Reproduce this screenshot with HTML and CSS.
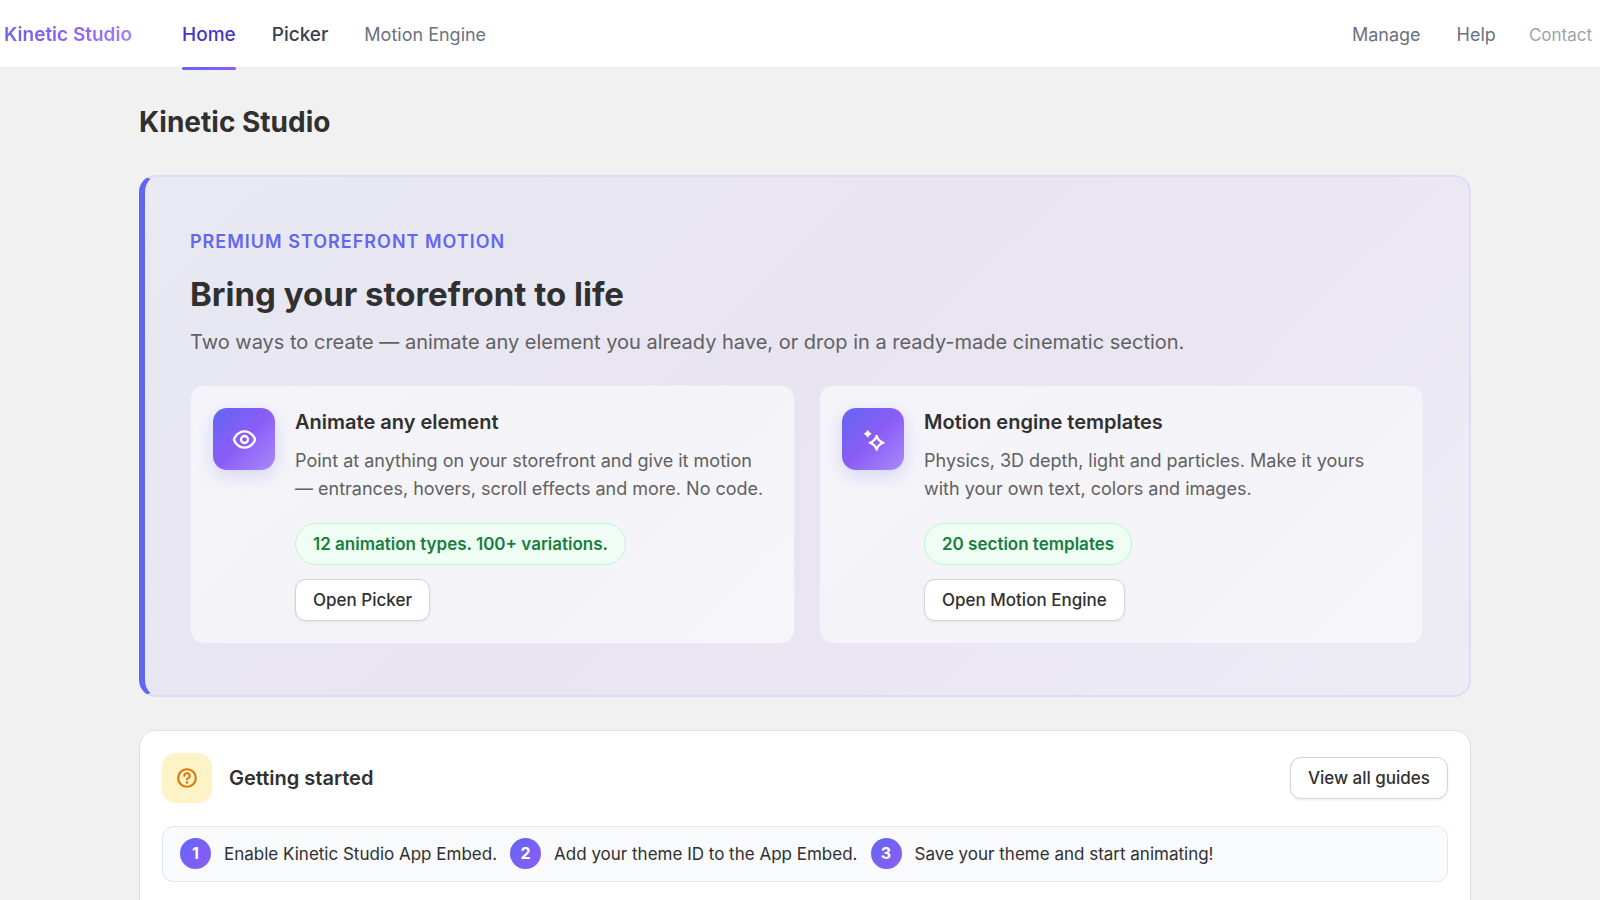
FILE: index.html
```html
<!DOCTYPE html>
<html lang="en">
<head>
    <meta charset="UTF-8">
    <meta name="viewport" content="width=device-width, initial-scale=1.0">
    <title>Kinetic Studio</title>
    <link rel="stylesheet" href="styles.css">
</head>
<body>
    <header class="topbar">
        <a href="#" class="brand">Kinetic Studio</a>
        <nav class="nav-main">
            <a href="#" class="nav-link active">Home</a>
            <a href="#" class="nav-link strong">Picker</a>
            <a href="#" class="nav-link">Motion Engine</a>
        </nav>
        <nav class="nav-side">
            <a href="#" class="nav-link">Manage</a>
            <a href="#" class="nav-link">Help</a>
            <a href="#" class="nav-contact">Contact</a>
        </nav>
    </header>

    <main class="page">
        <h1 class="page-title">Kinetic Studio</h1>

        <section class="hero">
            <p class="eyebrow">Premium storefront motion</p>
            <h2 class="hero-title">Bring your storefront to life</h2>
            <p class="hero-text">Two ways to create — animate any element you already have, or drop in a ready-made cinematic section.</p>

            <div class="feature-grid">
                <article class="feature">
                    <div class="feature-icon">
                        <svg width="31" height="31" viewBox="0 0 20 20" fill="currentColor" fill-rule="evenodd">
                            <path d="M13 10a3 3 0 1 1-6 0 3 3 0 0 1 6 0Zm-1.5 0a1.5 1.5 0 1 1-3 0 1.5 1.5 0 0 1 3 0Z"/>
                            <path d="M10 4c-2.476 0-4.348 1.23-5.577 2.532a9.266 9.266 0 0 0-1.4 1.922 5.98 5.98 0 0 0-.37.818c-.082.227-.153.488-.153.728s.071.501.152.728c.088.246.213.524.371.818.317.587.784 1.27 1.4 1.922 1.229 1.302 3.1 2.532 5.577 2.532 2.476 0 4.348-1.23 5.577-2.532a9.265 9.265 0 0 0 1.4-1.922 5.98 5.98 0 0 0 .37-.818c.082-.227.153-.488.153-.728s-.071-.501-.152-.728a5.984 5.984 0 0 0-.371-.818 9.269 9.269 0 0 0-1.4-1.922c-1.229-1.302-3.1-2.532-5.577-2.532Zm-5.999 6.002v-.004c.004-.02.017-.09.064-.223.058-.161.15-.369.278-.608.255-.474.644-1.042 1.171-1.6 1.053-1.117 2.57-2.067 4.486-2.067s3.433.95 4.486 2.066c.527.56.916 1.127 1.171 1.601.128.24.22.447.278.608.047.132.06.202.064.223v.004c-.004.02-.017.09-.064.223a4.49 4.49 0 0 1-.278.608c-.255.474-.644 1.042-1.171 1.6-1.053 1.117-2.57 2.067-4.486 2.067s-3.433-.95-4.486-2.066a7.77 7.77 0 0 1-1.171-1.601 4.484 4.484 0 0 1-.278-.608c-.047-.132-.06-.202-.064-.223Z"/>
                        </svg>
                    </div>
                    <div class="feature-body">
                        <h3>Animate any element</h3>
                        <p>Point at anything on your storefront and give it motion — entrances, hovers, scroll effects and more. No code.</p>
                        <span class="pill">12 animation types. 100+ variations.</span>
                        <button type="button" class="btn">Open Picker</button>
                    </div>
                </article>

                <article class="feature">
                    <div class="feature-icon">
                        <svg width="31" height="31" viewBox="0 0 20 20" stroke="currentColor" stroke-linejoin="round">
                            <path d="M6.3 4.5Q6.8 5.8 8.1 6.3Q6.8 6.8 6.3 8.1Q5.8 6.8 4.5 6.3Q5.8 5.8 6.3 4.5Z" fill="currentColor" stroke-width="1"/>
                            <path d="M12 7.7Q13 11.1 16.4 12.1Q13 13.1 12 16.5Q11 13.1 7.6 12.1Q11 11.1 12 7.7Z" fill="none" stroke-width="1.5"/>
                        </svg>
                    </div>
                    <div class="feature-body">
                        <h3>Motion engine templates</h3>
                        <p>Physics, 3D depth, light and particles. Make it yours with your own text, colors and images.</p>
                        <span class="pill">20 section templates</span>
                        <button type="button" class="btn">Open Motion Engine</button>
                    </div>
                </article>
            </div>
        </section>

        <section class="guide-card">
            <div class="guide-head">
                <div class="guide-icon">
                    <svg width="28" height="28" viewBox="0 0 20 20" fill="none" stroke="currentColor" stroke-width="1.5" stroke-linecap="round" stroke-linejoin="round">
                        <circle cx="10" cy="10" r="6.3"/>
                        <path d="M8.1 8.5a1.9 1.9 0 1 1 2.8 1.6c-.55.32-.9.54-.9 1"/>
                        <circle cx="10" cy="13.2" r=".9" fill="currentColor" stroke="none"/>
                    </svg>
                </div>
                <h2>Getting started</h2>
                <button type="button" class="btn">View all guides</button>
            </div>
            <ol class="steps">
                <li><span class="step-num">1</span>Enable Kinetic Studio App Embed.</li>
                <li><span class="step-num">2</span>Add your theme ID to the App Embed.</li>
                <li><span class="step-num">3</span>Save your theme and start animating!</li>
            </ol>
        </section>
    </main>
</body>
</html>
```
FILE: styles.css
```css
* {
    margin: 0;
    padding: 0;
    box-sizing: border-box;
}

body {
    background-color: #f1f1f1;
    color: #303030;
    font-family: Inter, sans-serif;
    font-size: 18px;
    line-height: 28px;
}

a {
    text-decoration: none;
}

/* Top bar */
.topbar {
    display: flex;
    align-items: center;
    height: 68px;
    padding: 2px 8px 0 4px;
    border-bottom: 1px solid #ededed;
    background-color: #fff;
}

.brand {
    margin-right: 50px;
    font-size: 19px;
    font-weight: 600;
    background: linear-gradient(135deg, #6366f1, #8b5cf6 50%, #a78bfa);
    -webkit-background-clip: text;
    background-clip: text;
    color: transparent;
}

.nav-main,
.nav-side {
    display: flex;
    align-items: center;
    gap: 36px;
}

.nav-side {
    margin-left: auto;
}

.nav-link {
    position: relative;
    color: #6b7280;
    line-height: 68px;
}

.nav-link.strong {
    color: #374151;
    font-size: 19px;
    font-weight: 500;
}

.nav-link.active {
    color: #4338ca;
    font-size: 19px;
    font-weight: 500;
}

.nav-link.active::after {
    content: "";
    position: absolute;
    left: 0;
    right: 0;
    bottom: -1px;
    height: 3px;
    border-radius: 2px;
    background: linear-gradient(90deg, #6366f1, #8b5cf6);
}

.nav-contact {
    margin-left: -3px;
    color: #9ca3af;
    font-size: 17px;
}

/* Page */
.page {
    padding: 34px 129px 40px 139px;
}

.page-title {
    margin-bottom: 33px;
    font-size: 28px;
    font-weight: 700;
    line-height: 40px;
}

/* Hero */
.hero {
    padding: 51px 45px;
    border: 2px solid #dfdcf4;
    border-left: 6px solid #6366f1;
    border-radius: 17px;
    background: linear-gradient(135deg, #e8e9f2, #e8e4f1 50%, #edecf4);
}

.eyebrow {
    margin-bottom: 18px;
    color: #6366f1;
    font-weight: 600;
    letter-spacing: 1px;
    text-transform: uppercase;
}

.hero-title {
    margin-bottom: 14px;
    font-size: 33px;
    font-weight: 700;
    line-height: 40px;
}

.hero-text {
    margin-bottom: 29px;
    color: #616161;
    font-size: 20px;
}

.feature-grid {
    display: grid;
    grid-template-columns: repeat(2, 1fr);
    gap: 24px;
}

.feature {
    display: flex;
    align-items: flex-start;
    gap: 20px;
    padding: 22px;
    border: 1px solid #e9e7f8;
    border-radius: 14px;
    background: linear-gradient(135deg, #f4f4f9, #f4f3f8 60%, #f6f6f9);
}

.feature-icon {
    display: flex;
    flex-shrink: 0;
    align-items: center;
    justify-content: center;
    width: 62px;
    height: 62px;
    border-radius: 14px;
    background: linear-gradient(135deg, #6366f1, #8b5cf6 50%, #a78bfa);
    box-shadow: 0 6px 17px rgba(99, 102, 241, 0.2);
    color: #fff;
}

.feature-body {
    display: flex;
    flex-direction: column;
    align-items: flex-start;
}

.feature-body h3 {
    margin-bottom: 11px;
    font-size: 20px;
    font-weight: 600;
}

.feature-body p {
    margin-bottom: 20px;
    color: #616161;
}

.pill {
    margin-bottom: 14px;
    padding: 6px 17px;
    border: 1px solid #bbf7d0;
    border-radius: 21px;
    background-color: #f0fdf4;
    color: #15803d;
    font-size: 17px;
    font-weight: 600;
}

.btn {
    padding: 6px 17px;
    border: 1px solid #d1d5db;
    border-radius: 11px;
    background-color: #fff;
    box-shadow: 0 1px 3px rgba(0, 0, 0, 0.08);
    color: #303030;
    font-family: inherit;
    font-size: 17px;
    font-weight: 500;
    line-height: 28px;
    cursor: pointer;
}

/* Getting started */
.guide-card {
    margin-top: 33px;
    padding: 22px 22px 40px;
    border: 1px solid #e0e0e0;
    border-radius: 17px;
    background-color: #fff;
}

.guide-head {
    display: flex;
    align-items: center;
    gap: 17px;
    margin-bottom: 23px;
}

.guide-head h2 {
    flex: 1;
    font-size: 20px;
    font-weight: 600;
}

.guide-icon {
    display: flex;
    align-items: center;
    justify-content: center;
    width: 50px;
    height: 50px;
    border-radius: 14px;
    background-color: #fef3c7;
    color: #d97706;
}

.steps {
    display: flex;
    flex-wrap: wrap;
    gap: 13px;
    padding: 11px 17px 12px;
    border: 1px solid #e2e8f0;
    border-radius: 11px;
    background-color: #f8fafc;
    font-size: 17px;
    list-style: none;
}

.steps li {
    display: flex;
    align-items: center;
    gap: 13px;
}

.step-num {
    width: 31px;
    border-radius: 50%;
    background: linear-gradient(135deg, #6366f1, #8b5cf6);
    color: #fff;
    font-size: 16px;
    font-weight: 700;
    line-height: 31px;
    text-align: center;
}
```
